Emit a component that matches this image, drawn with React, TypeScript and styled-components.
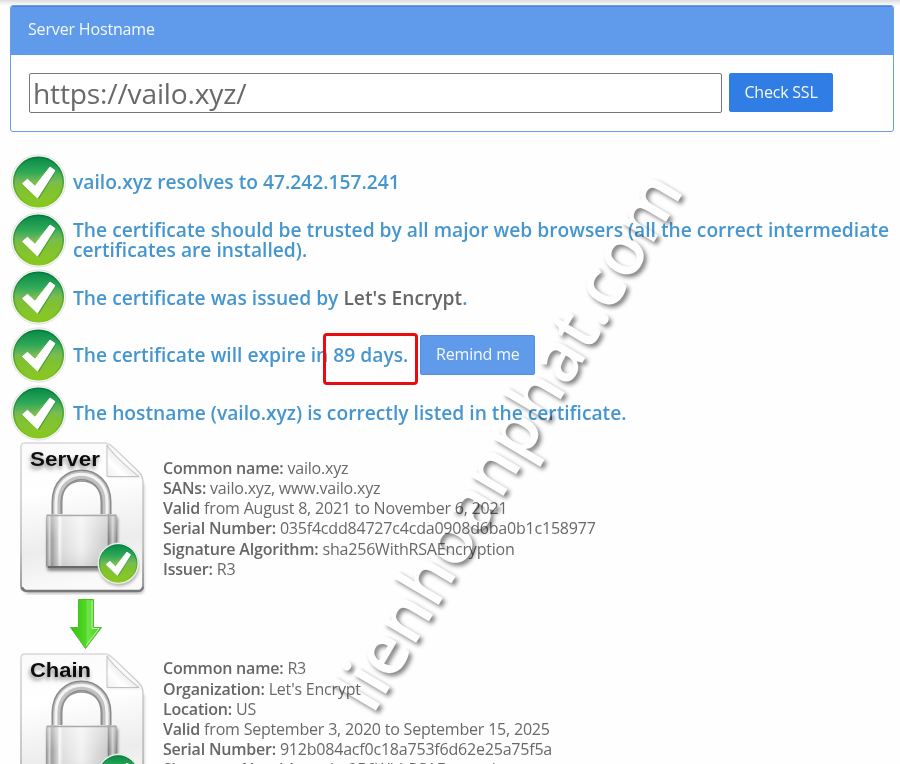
import React from "react";
import styled, { createGlobalStyle } from "styled-components";

const Global = createGlobalStyle`
  * { box-sizing: border-box; }
  html, body { margin: 0; height: 100%; overflow: hidden; }
  body { background: #fefefe; color: #696969; font-family: "Open Sans", "Noto Sans", sans-serif; }
`;

const Page = styled.main`
  position: relative;
  width: 900px;
  height: 764px;
  overflow: hidden;
  padding: 5px 6px 0 10px;
  background: linear-gradient(#dcdcdc 0, #f0f0f0 3px, #fefefe 6px);
`;

const Panel = styled.section`
  width: 884px;
  height: 127px;
  border: 1px solid #689eea;
  border-radius: 3px;
  background: #fff;
  overflow: hidden;
`;

const PanelHead = styled.header`
  height: 49px;
  padding-left: 17px;
  line-height: 46px;
  font-size: 16px;
  letter-spacing: -0.16px;
  color: #f4f9ff;
  background: #5f9aeb;
  box-shadow: inset 0 1px #4885dc;
`;

const Form = styled.div`
  display: flex;
  gap: 7px;
  padding: 18px;
`;

const HostInput = styled.input`
  width: 693px;
  height: 40px;
  padding: 0 3px 0 3px;
  border: 1px solid #777;
  border-radius: 2px;
  background: #fff;
  color: #696969;
  font-family: "Open Sans", sans-serif;
  font-size: 28.2px;
  letter-spacing: -0.2px;
  outline: none;
`;

const Button = styled.button<{ $primary?: boolean }>`
  flex: none;
  width: ${(p) => (p.$primary ? 104 : 115)}px;
  height: ${(p) => (p.$primary ? 39 : 40)}px;
  margin-left: ${(p) => (p.$primary ? 0 : 5)}px;
  padding: 0 0 2px;
  border: 1px solid ${(p) => (p.$primary ? "#2f7de5" : "#5390e5")};
  border-radius: 2px;
  background: ${(p) => (p.$primary ? "#2f7de5" : "#5f9aeb")};
  color: #f4f9ff;
  font-family: "Open Sans", sans-serif;
  font-size: 16px;
  letter-spacing: -0.2px;
`;

const StatusList = styled.ul`
  list-style: none;
  margin: 21px 0 0;
  padding: 0;
`;

const StatusRow = styled.li`
  display: flex;
  align-items: center;
  height: 57.7px;
  gap: 7px;
  white-space: nowrap;
  color: #4596cf;
  font-size: 19.23px;
  font-weight: 600;
  line-height: 20px;
`;

const StatusText = styled.span`
  padding-top: 1px;
`;

const StatusIcon = styled.svg`
  flex: none;
  width: 56px;
  height: 58px;
`;

const Dark = styled.span`
  color: #666;
`;

const Days = styled.span`
  position: relative;
`;

const Highlight = styled.i`
  position: absolute;
  left: -10px;
  top: -8px;
  width: 95px;
  height: 52px;
  border: 3px solid #e80c10;
  border-radius: 4px;
`;

const CertRow = styled.section`
  display: flex;
  height: 154px;
  padding-left: 8px;
`;

const CertArt = styled.svg`
  flex: none;
  width: 130px;
  height: 154px;
`;

const Details = styled.dl<{ $top: number }>`
  margin: ${(p) => p.$top}px 0 0 15px;
  font-size: 16px;
  letter-spacing: -0.2px;
  line-height: 20.15px;
  white-space: nowrap;
`;

const Detail = styled.div`
  height: 20.15px;
  dt, dd { display: inline; margin: 0; }
  dt { font-weight: 600; color: #666; }
`;

const ArrowRow = styled.div`
  height: 57px;
  padding-left: 59px;
`;

const Watermark = styled.svg`
  position: absolute;
  inset: 0;
  width: 900px;
  height: 764px;
  mix-blend-mode: multiply;
  pointer-events: none;
  filter: drop-shadow(3px 3px 2px rgba(0, 0, 0, 0.48));
`;

const DefsHolder = styled.svg`
  position: absolute;
`;

function Defs() {
  return (
    <defs>
      <linearGradient id="disc" x2="0" y2="1">
        <stop offset="0" stopColor="#078a48" />
        <stop offset=".3" stopColor="#2fa957" />
        <stop offset=".5" stopColor="#75b957" />
        <stop offset=".58" stopColor="#78bd35" />
        <stop offset="1" stopColor="#8bc91d" />
      </linearGradient>
      <linearGradient id="ring" x2="0" y2="1">
        <stop offset="0" stopColor="#007a3e" />
        <stop offset="1" stopColor="#86c81c" />
      </linearGradient>
      <linearGradient id="paper" x2=".15" y2="1">
        <stop offset="0" stopColor="#fafafa" />
        <stop offset=".35" stopColor="#fff" />
        <stop offset=".75" stopColor="#ececec" />
        <stop offset="1" stopColor="#fafafa" />
      </linearGradient>
      <linearGradient id="edge" x2="0" y2="1">
        <stop offset="0" stopColor="#d8d8d8" />
        <stop offset=".7" stopColor="#b7b7b7" />
        <stop offset="1" stopColor="#7b7b7b" />
      </linearGradient>
      <linearGradient id="metal">
        <stop offset="0" stopColor="#858585" />
        <stop offset=".05" stopColor="#d3d3d3" />
        <stop offset=".08" stopColor="#999" />
        <stop offset=".16" stopColor="#cfcfcf" />
        <stop offset=".19" stopColor="#f6f6f6" />
        <stop offset=".24" stopColor="#dedede" />
        <stop offset=".5" stopColor="#f2f2f2" />
        <stop offset=".86" stopColor="#c8c8c8" />
        <stop offset=".88" stopColor="#777" />
        <stop offset=".94" stopColor="#ccc" />
        <stop offset="1" stopColor="#777" />
      </linearGradient>
      <linearGradient id="sheen" x2="0" y2="1">
        <stop offset="0" stopColor="#fff" stopOpacity=".4" />
        <stop offset=".5" stopColor="#fff" stopOpacity=".05" />
        <stop offset="1" stopColor="#777" stopOpacity=".2" />
      </linearGradient>
      <linearGradient id="fold" x1="0" y1="1" x2=".7" y2=".3">
        <stop offset="0" stopColor="#eee" />
        <stop offset=".4" stopColor="#fff" />
        <stop offset="1" stopColor="#ddd" />
      </linearGradient>
      <linearGradient id="arrow">
        <stop offset="0" stopColor="#39bd15" />
        <stop offset=".5" stopColor="#4fda22" />
        <stop offset=".55" stopColor="#72e34b" />
        <stop offset="1" stopColor="#43c91c" />
      </linearGradient>
      <filter id="soft" x="-30%" y="-30%" width="160%" height="160%">
        <feGaussianBlur stdDeviation="1.5" />
      </filter>
      <filter id="titleShadow" x="-20%" y="-40%" width="140%" height="200%">
        <feDropShadow dx="-1" dy="3" stdDeviation="2" floodColor="#555" floodOpacity=".7" />
      </filter>
    </defs>
  );
}

function CheckDisc() {
  return (
    <>
      <circle cx="28.5" cy="29" r="27.2" fill="#f3f3f3" stroke="#dedede" strokeWidth=".8" />
      <circle cx="28.5" cy="29" r="24.8" fill="url(#disc)" stroke="url(#ring)" strokeWidth="1.4" />
      <path d="M5 32Q20 32 31 22T51 22Q54 32 49 42Q31 55 9 43Z" fill="#94ce40" opacity=".18" />
      <path d="M13.5 31.5L18.5 27L26 34.5L40 13.5L46.5 17.5L29 46Z" fill="#157c38" opacity=".5" />
      <path d="M12.5 30.5L17.5 26.3L25 33.3L40 14L45 17.5L27.5 45Z" fill="#fff" stroke="#fff" strokeWidth="1" />
    </>
  );
}

function Certificate({ title }: { title: string }) {
  return (
    <CertArt viewBox="0 0 130 154">
      <path d="M6 9V148Q6 153 11 153H121Q126 153 126 148V43Z" fill="#777" opacity=".45" filter="url(#soft)" />
      <path d="M7 2H88Q92 3 96 7L121 31Q125 35 125 42V145Q125 150 120 150H8Q3 150 3 145V6Q3 2 7 2Z" fill="url(#paper)" stroke="url(#edge)" strokeWidth="1.5" />
      <path d="M4 146Q5 150 10 150H120Q124 150 125 146" fill="none" stroke="#787878" strokeWidth="2.3" />
      <path d="M90 6V36H124C116 33 98 17 90 6Z" fill="#777" opacity=".3" filter="url(#soft)" />
      <path d="M89 4V35.5H121Q117 33 105 22Q93 11 89 4Z" fill="url(#fold)" stroke="#b5b5b5" strokeWidth=".8" />
      <path d="M39 73V61C39 25 88 25 88 61V73" fill="none" stroke="#8b8b8b" strokeWidth="11" />
      <path d="M39 73V61C39 25 88 25 88 61V73" fill="none" stroke="#c1c1c1" strokeWidth="8" />
      <path d="M38 73V61C38 24 89 24 89 61V73" fill="none" stroke="#f4f4f4" strokeWidth="3" />
      <path d="M43 73V61C43 33 84 33 84 61V73" fill="none" stroke="#929292" strokeWidth="1.3" />
      <rect x="29" y="76" width="71" height="54" rx="3" fill="#444" opacity=".6" filter="url(#soft)" />
      <rect x="28" y="73" width="71" height="54" rx="3" fill="url(#metal)" />
      <rect x="28" y="73" width="71" height="54" rx="3" fill="url(#sheen)" />
      <path d="M29 74.5H98" stroke="#aaa" strokeWidth="1.5" />
      <path d="M30 126H90" stroke="#686868" strokeWidth="2" />
      <text x="12" y="24.5" textLength={title === "Server" ? 70 : 61} lengthAdjust="spacingAndGlyphs" fontFamily="Liberation Sans" fontSize="20.5" fontWeight="700" fill="#080808" filter="url(#titleShadow)">{title}</text>
      <ellipse cx="101" cy="126" rx="20" ry="19" fill="#555" opacity=".45" filter="url(#soft)" />
      <g transform="translate(78.7 100.5) scale(.755)"><CheckDisc /></g>
    </CertArt>
  );
}

const server = [
  ["Common name:", "vailo.xyz"],
  ["SANs:", "vailo.xyz, www.vailo.xyz"],
  ["Valid", "from August 8, 2021 to November 6, 2021"],
  ["Serial Number:", "035f4cdd84727c4cda0908d6ba0b1c158977"],
  ["Signature Algorithm:", "sha256WithRSAEncryption"],
  ["Issuer:", "R3"],
];

const chain = [
  ["Common name:", "R3"],
  ["Organization:", "Let's Encrypt"],
  ["Location:", "US"],
  ["Valid", "from September 3, 2020 to September 15, 2025"],
  ["Serial Number:", "912b084acf0c18a753f6d62e25a75f5a"],
  ["Signature Algorithm:", "sha256WithRSAEncryption"],
];

function CertificateInfo({ title, rows, top }: { title: string; rows: string[][]; top: number }) {
  return (
    <CertRow>
      <Certificate title={title} />
      <Details $top={top}>
        {rows.map(([label, value]) => (
          <Detail key={label}><dt>{label}</dt> <dd>{value}</dd></Detail>
        ))}
      </Details>
    </CertRow>
  );
}

function Status({ children, action }: { children: React.ReactNode; action?: React.ReactNode }) {
  return (
    <StatusRow>
      <StatusIcon viewBox="0 0 56 58"><CheckDisc /></StatusIcon>
      <StatusText>{children}</StatusText>
      {action}
    </StatusRow>
  );
}

export default function App() {
  return (
    <Page>
      <Global />
      <DefsHolder width="0" height="0"><Defs /></DefsHolder>
      <Panel>
        <PanelHead>Server Hostname</PanelHead>
        <Form>
          <HostInput defaultValue="https://vailo.xyz/" aria-label="Server Hostname" />
          <Button $primary>Check SSL</Button>
        </Form>
      </Panel>
      <StatusList>
        <Status>vailo.xyz resolves to 47.242.157.241</Status>
        <Status>The certificate should be trusted by all major web browsers (all the correct intermediate<br />certificates are installed).</Status>
        <Status>The certificate was issued by <Dark>Let's Encrypt</Dark>.</Status>
        <Status action={<Button>Remind me</Button>}>
          The certificate will expire in <Days>89 days.<Highlight /></Days>
        </Status>
        <Status>The hostname (vailo.xyz) is correctly listed in the certificate.</Status>
      </StatusList>
      <CertificateInfo title="Server" rows={server} top={16.5} />
      <ArrowRow>
        <svg width="34" height="57" viewBox="0 0 34 57">
          <path d="M9.5 4.5H24.5V32.5H32.5L16.5 53.5L1.5 32.5H9.5Z" fill="url(#arrow)" stroke="#4abf27" />
          <path d="M23 5.5V33.5H30L17 50.5" fill="none" stroke="#bdf5a9" />
        </svg>
      </ArrowRow>
      <CertificateInfo title="Chain" rows={chain} top={6} />
      <Watermark viewBox="0 0 900 764">
        <text transform="translate(373 715.5) rotate(-59.3)" textLength="611" lengthAdjust="spacingAndGlyphs" fontFamily="Open Sans" fontWeight="600" fontSize="70" fill="#fff">lienhoanphat.com</text>
      </Watermark>
    </Page>
  );
}
